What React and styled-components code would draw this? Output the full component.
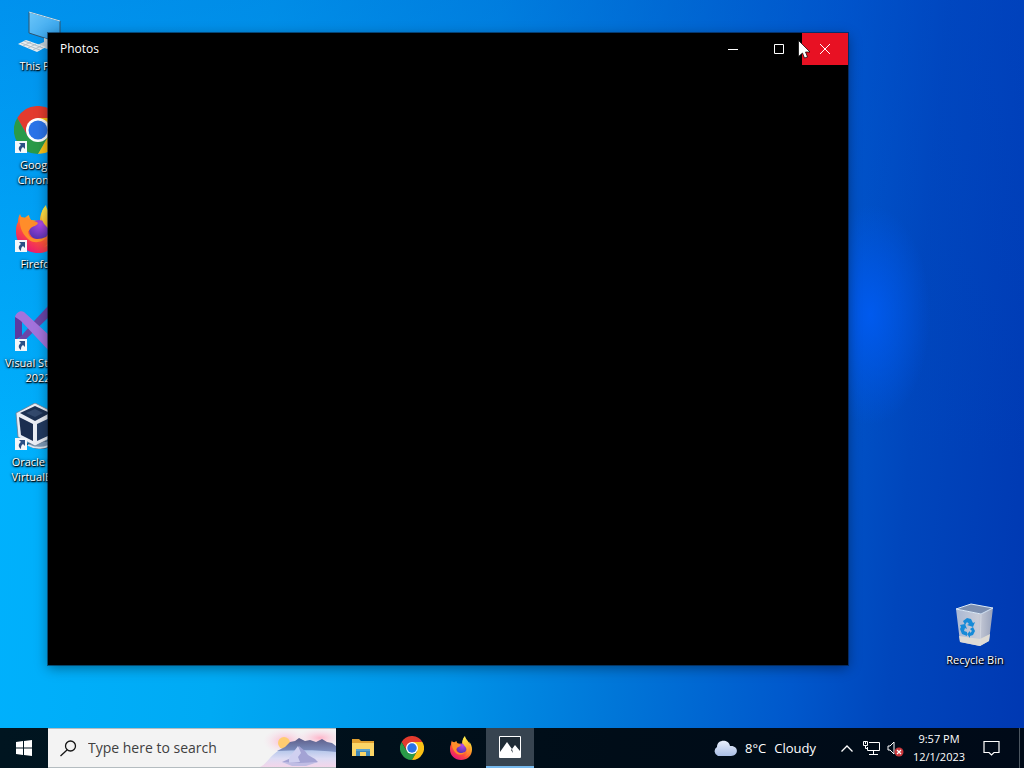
import React from "react";
import styled, { createGlobalStyle } from "styled-components";

const GlobalStyle = createGlobalStyle`
  * {
    box-sizing: border-box;
  }

  body {
    margin: 0;
    font-family: "Open Sans", "Noto Sans", sans-serif;
    overflow: hidden;
  }

  button, input {
    font: inherit;
    border: 0;
    padding: 0;
    margin: 0;
    background: none;
    color: inherit;
  }
`;

const Desktop = styled.div`
  display: flex;
  flex-direction: column;
  height: 100vh;
  background:
    radial-gradient(ellipse 60px 110px at 85% 41%, rgba(0, 92, 245, 0.85), rgba(0, 92, 245, 0) 100%),
    linear-gradient(180deg, rgba(0, 72, 200, 0.3) 0%, rgba(0, 72, 200, 0) 60%),
    linear-gradient(95deg, #00b2fe 0%, #00aaf4 25%, #0094e8 46%, #0076d8 62%, #0058cc 78%, #0046bc 87%, #0038b2 100%);
`;

const Workspace = styled.main`
  position: relative;
  flex: 1;
  display: flex;
  justify-content: space-between;
  padding-right: 11px;
`;

const IconColumn = styled.div`
  display: flex;
  flex-direction: column;
  justify-content: ${(props) => (props.$end ? "flex-end" : "flex-start")};
  padding-bottom: ${(props) => (props.$end ? "35px" : "0")};
  width: 76px;
`;

const Shortcut = styled.button`
  display: flex;
  flex-direction: column;
  align-items: center;
  gap: 3px;
  height: 99px;
  padding-top: 7px;
  color: #fff;
`;

const ShortcutPicture = styled.span`
  position: relative;
  width: 48px;
  height: 48px;

  svg {
    display: block;
  }
`;

const ArrowBadge = styled.span`
  position: absolute;
  left: 1px;
  bottom: 1px;
`;

const ShortcutLabel = styled.span`
  font-size: 11px;
  line-height: 15px;
  text-align: center;
  white-space: pre;
  text-shadow: 1px 1px 1px #000, 0 1px 2px #000, 0 0 3px rgba(0, 0, 0, 0.5);
`;

const Window = styled.section`
  position: absolute;
  top: 33px;
  right: 176px;
  bottom: 63px;
  left: 48px;
  background: #000;
  box-shadow: 0 0 0 1px rgba(10, 25, 50, 0.55), 0 3px 12px rgba(0, 0, 0, 0.4);
`;

const TitleBar = styled.header`
  display: flex;
  align-items: center;
  height: 32px;
  padding-left: 12px;
  color: #fff;
`;

const Title = styled.h1`
  flex: 1;
  margin: 0;
  font-size: 12px;
  font-weight: 400;
  line-height: 16px;
`;

const CaptionButton = styled.button`
  display: grid;
  place-items: center;
  width: 46px;
  height: 32px;
  background: ${(props) => (props.$danger ? "#e81123" : "transparent")};
`;

const Pointer = styled.svg`
  position: absolute;
  top: 7px;
  right: 38px;
`;

const Taskbar = styled.footer`
  display: flex;
  align-items: stretch;
  height: 40px;
  background: linear-gradient(90deg, #001520, #000d18 60%, #000a18);
  color: #fff;
`;

const TaskButton = styled.button`
  display: grid;
  place-items: center;
  width: 48px;
  background: ${(props) => (props.$active ? "#374450" : "transparent")};
  border-bottom: ${(props) => (props.$active ? "2px solid #76b9ed" : "0")};
`;

const SearchBox = styled.label`
  display: flex;
  align-items: center;
  width: 288px;
  padding-left: 12px;
  gap: 11px;
  background: #f3f3f3;
  border: solid #b4bcc0;
  border-width: 1px 0;
  color: #111;

  svg {
    flex: none;
  }
`;

const SearchInput = styled.input`
  flex: 1;
  min-width: 0;
  font-size: 14px;
  line-height: 20px;
  outline: none;

  &::placeholder {
    color: #404040;
    opacity: 1;
  }
`;

const Apps = styled.nav`
  display: flex;
  flex: 1;
  gap: 1px;
  padding-left: 3px;
`;

const Weather = styled.button`
  display: flex;
  align-items: center;
  gap: 8px;
  margin-right: 19px;
  font-size: 13px;
  line-height: 20px;
`;

const TrayButton = styled.button`
  display: grid;
  place-items: center;
  width: 24px;
`;

const Clock = styled.button`
  width: 64px;
  font-size: 11px;
  line-height: 18px;
  text-align: center;
`;

const Notifications = styled.button`
  display: grid;
  place-items: center;
  width: 40px;
`;

const ShowDesktop = styled.button`
  width: 5px;
  margin-left: 8px;
  border-left: 1px solid #4c5660;
`;

const ChromeIcon = ({ size }) => (
  <svg width={size} height={size} viewBox="0 0 48 48">
    <path fill="#e33b2e" d="M24 12h20.8A24 24 0 0 0 3.2 12l10.4 18L24 24z" />
    <path fill="#2a9a48" d="M13.6 30 3.2 12A24 24 0 0 0 24 48l10.4-18L24 24z" />
    <path fill="#fbc116" d="M34.4 30 24 48a24 24 0 0 0 20.8-36H24v12z" />
    <circle cx="24" cy="24" r="12" fill="#fff" />
    <circle cx="24" cy="24" r="9.5" fill="#2a73e8" />
  </svg>
);

const FirefoxIcon = ({ size }) => (
  <svg width={size} height={size} viewBox="0 0 48 48">
    <defs>
      <linearGradient id="foxBody" x1="0.8" y1="0.1" x2="0.25" y2="0.95">
        <stop offset="0" stopColor="#fff14a" />
        <stop offset="0.35" stopColor="#ffa528" />
        <stop offset="0.65" stopColor="#ff5338" />
        <stop offset="1" stopColor="#e81576" />
      </linearGradient>
      <linearGradient id="foxFlame" x1="0.4" y1="0" x2="0.6" y2="1">
        <stop offset="0" stopColor="#fff04d" />
        <stop offset="0.5" stopColor="#ffb52e" />
        <stop offset="1" stopColor="#ff6a36" />
      </linearGradient>
      <radialGradient id="foxGlobe" cx="0.6" cy="0.2" r="0.9">
        <stop offset="0" stopColor="#b049e8" />
        <stop offset="1" stopColor="#4b2fa8" />
      </radialGradient>
    </defs>
    <path
      fill="url(#foxBody)"
      d="M4 17C4 13 5 11 6 9c1 3 2 4 4 5 1-2 3-3 5-4 0 2 1 3 2 5l9 1c0-6 2-12 6-15 0 5 3 7 6 10 1 1 2 3 3 5 0-2 0-3-1-5 4 4 6 10 6 16 0 13-10 21-22 21S2 39 2 27c0-4 0-7 2-10z"
    />
    <circle cx="25" cy="25" r="10" fill="url(#foxGlobe)" />
    <path
      fill="url(#foxFlame)"
      d="M32 0c0 6 8 9 8 19 1-1 1-3 1-4 5 12 0 24-11 27 6-4 8-9 6-15-1-4-5-6-7-10-3-6-1-13 3-17z"
    />
    <path fill="#ff8d2a" d="M6 12c3 0 8 1 11 3 2 1 5 1 7 3-1 3-5 3-7 5-2 1-1 3-3 3 0 5 4 8 9 8 4 0 6-1 9-2-3 6-13 7-18 2-7-6-9-15-8-22z" />
  </svg>
);

const ComputerIcon = () => (
  <svg width="48" height="48" viewBox="0 0 48 48">
    <defs>
      <linearGradient id="screen" x1="0" y1="0" x2="1" y2="1">
        <stop offset="0" stopColor="#6cc6fa" />
        <stop offset="1" stopColor="#289be8" />
      </linearGradient>
    </defs>
    <path d="M15 5 46 14v22L15 26z" fill="url(#screen)" stroke="#31546f" strokeWidth="1" />
    <path d="M15 5 46 14" stroke="#c9e7f7" strokeWidth="1" />
    <path d="m30 31 6 2v4l5 2-8 3-10-4 7-3z" fill="#c5d2da" />
    <path d="m4 37 8-4 20 7-9 5z" fill="#e8edf0" />
    <path d="m7 36 19 7M10 34l19 7M9 39l8-4M14 41l8-4M19 43l8-4" stroke="#b4c0c8" strokeWidth="1" />
  </svg>
);

const VisualStudioIcon = () => (
  <svg width="48" height="48" viewBox="0 0 48 48">
    <path d="m1 12 7 5v15l-7 4z" fill="#5c3aa0" />
    <path d="m3 37 18-21L34 2l3-1 10 5v8L36 12 9 38c-2 1-4 0-6-1z" fill="#6a46a8" />
    <path d="M1 13c1-4 5-7 9-5l26 24 11 6v5l-11 5L8 18c-2-2-5-4-7-5z" fill="#a373dc" />
    <path d="m36 1 11 5v37l-11 5z" fill="#b985ec" />
  </svg>
);

const VirtualBoxIcon = () => (
  <svg width="48" height="48" viewBox="0 0 48 48">
    <path d="M13 41c6 6 20 6 28 0l2-5-22 4z" fill="#7d9ab8" stroke="#24415f" />
    <path d="M14 42c7 4 17 4 26-2" fill="none" stroke="#dbe6f0" strokeWidth="2" />
    <path d="M21 0 41 10 39 34 21 43 4 34 2 10z" fill="#e9edf5" stroke="#6a7c94" strokeWidth="0.8" />
    <path d="M21 3 36 10 21 18 6 10z" fill="#1d3152" />
    <path d="m5 14 14 7v17L7 32z" fill="#1b2e50" />
    <path d="m23 21 15-7-2 18-13 6z" fill="#223a60" />
    <path d="m12 10 9-4 8 4-8 4z" fill="#33496c" />
  </svg>
);

const RecycleIcon = () => (
  <svg width="48" height="48" viewBox="0 0 48 48">
    <defs>
      <linearGradient id="bin" x1="0" y1="0" x2="1" y2="0">
        <stop offset="0" stopColor="#a9b8d4" />
        <stop offset="0.6" stopColor="#c8ccd8" />
        <stop offset="1" stopColor="#98a2ba" />
      </linearGradient>
    </defs>
    <path d="m5 8 25 5 12-6-4 33-9 5-20-4z" fill="url(#bin)" />
    <path d="m8 35 21 3 10-5-1 7-9 5-20-4z" fill="#dedbd5" />
    <path d="m5 8 15-5 22 4-12 6z" fill="#7d8faf" stroke="#dce9f5" strokeWidth="1" />
    <path d="m30 14-1 30" stroke="#dcdfe8" strokeWidth="0.6" />
    <g fill="#168bd8">
      <path d="m12 20 4-3 4 1 2 4 2-1-2 5-6-2 2-1-2-2-2 3z" />
      <path d="m9 24 5-1 2 5-2-1-1 3 3 1v4l-5-2-2-5 1-2z" />
      <path d="m19 28 3-2 2 4-2 4-3 1v2l-3-4 3-3v2l2-2z" />
    </g>
  </svg>
);

const ShortcutArrow = () => (
  <svg width="12" height="12" viewBox="0 0 12 12">
    <path fill="#f4f7fa" d="M0 0h12v12H0z" />
    <path fill="#2b4f85" d="M4 2h6v6L8 6c-2 1-2 3-2 5-3-2-3-5 0-7z" />
  </svg>
);

const WindowsLogo = () => (
  <svg width="16" height="16" viewBox="0 0 16 16" fill="#fff">
    <path d="m0 2 7-1v6.500H0zM8 1l8-1v7.500H8zM0 8.500h7V15l-7-1zM8 8.500h8V16l-8-1z" />
  </svg>
);

const SearchIcon = () => (
  <svg width="17" height="17" viewBox="0 0 17 17" fill="none" stroke="#151515" strokeWidth="1.3">
    <circle cx="10.500" cy="6" r="5" />
    <path d="m7 10-6.500 6" />
  </svg>
);

const SearchArt = () => (
  <svg width="78" height="38" viewBox="0 0 78 38">
    <defs>
      <radialGradient id="glow">
        <stop offset="0" stopColor="#ffb4c8" />
        <stop offset="1" stopColor="#f7dfef" stopOpacity="0" />
      </radialGradient>
      <linearGradient id="sea" x1="0" y1="0" x2="0" y2="1">
        <stop offset="0" stopColor="#b4c6ea" />
        <stop offset="0.5" stopColor="#dcdcf4" />
        <stop offset="1" stopColor="#f4d6ea" />
      </linearGradient>
      <linearGradient id="hills" x1="0" y1="0" x2="0" y2="1">
        <stop offset="0" stopColor="#5d5d88" />
        <stop offset="1" stopColor="#7f93c4" />
      </linearGradient>
    </defs>
    <ellipse cx="27" cy="12" rx="22" ry="13" fill="url(#glow)" />
    <ellipse cx="62" cy="9" rx="24" ry="10" fill="url(#glow)" />
    <circle cx="26" cy="14" r="6" fill="#ffcc70" />
    <path d="M2 38c7-3 11-13 20-17h56v17z" fill="url(#sea)" />
    <path d="m19 22 8-4 5-5 5-1 4-3 6 3 5-1 6 2 6-3 5 3 5 1 4 3v6c-16-2-38-2-59-1z" fill="url(#hills)" />
    <path d="m24 33 9-4 6-8 2-4 6 5 3 4 7 4 3 3-16 3z" fill="#a3a3d4" />
    <path d="m31 29 9-12 3 7-3 4 2 5-11 1z" fill="#d0d0f0" />
    <path d="m24 33 18 1 18-1-12 4H34z" fill="#c0bde4" />
  </svg>
);

const ExplorerIcon = () => (
  <svg width="22" height="20" viewBox="0 0 22 20">
    <path d="M0 1h7l2 2h13v15H0z" fill="#e0a030" />
    <path d="M0 5h22v13H0z" fill="#fbd566" />
    <path d="M4 11h14v7h-4v-4H8v4H4z" fill="#3f88b8" />
    <path d="M4 11h14v2H4z" fill="#5ba3cc" />
  </svg>
);

const PhotosIcon = () => (
  <svg width="22" height="22" viewBox="0 0 22 22">
    <path d="M.5.500h21v21H.500z" fill="#202c36" stroke="#fff" />
    <path d="M1 16 8 6l5 7 3-4 5 6v6H1z" fill="#fff" />
    <path d="m12 14 2 3-1-4z" fill="#202c36" />
  </svg>
);

const CloudIcon = () => (
  <svg width="24" height="17" viewBox="0 0 24 17">
    <defs>
      <linearGradient id="cloud" x1="0" y1="0" x2="0" y2="1">
        <stop offset="0" stopColor="#e8effc" />
        <stop offset="1" stopColor="#a9bee5" />
      </linearGradient>
    </defs>
    <path d="M5 16a5 5 0 0 1-1-9C4-1 16-1 17 6c9-1 9 10 1 10z" fill="url(#cloud)" />
  </svg>
);

const NetworkIcon = () => (
  <svg width="17" height="16" viewBox="0 0 17 16" fill="none" stroke="#fff">
    <path d="M6 2.500h10.500v8H4.500V7M10.500 10.500v4M6 14.500h9M.500 1.500h4v4h-4zM2.500 5.500v3h2M2.500 2v2" />
  </svg>
);

const VolumeIcon = () => (
  <svg width="17" height="17" viewBox="0 0 17 17">
    <path d="M1 6h2l4-4v12l-4-4H1z" fill="none" stroke="#fff" strokeLinejoin="round" />
    <circle cx="12" cy="12" r="4.500" fill="#c8363b" />
    <path d="m10 10 4 4m0-4-4 4" stroke="#fff" strokeWidth="1.2" />
  </svg>
);

const shortcuts = [
  { label: "This PC", icon: <ComputerIcon /> },
  { label: "Google\nChrome", icon: <ChromeIcon size={48} />, linked: true },
  { label: "Firefox", icon: <FirefoxIcon size={48} />, linked: true },
  { label: "Visual Studio\n2022", icon: <VisualStudioIcon />, linked: true },
  { label: "Oracle VM\nVirtualBox", icon: <VirtualBoxIcon />, linked: true },
];

const apps = [
  { name: "File Explorer", icon: <ExplorerIcon /> },
  { name: "Google Chrome", icon: <ChromeIcon size={24} /> },
  { name: "Firefox", icon: <FirefoxIcon size={24} /> },
  { name: "Photos", icon: <PhotosIcon />, active: true },
];

const DesktopShortcut = ({ label, icon, linked }) => (
  <Shortcut>
    <ShortcutPicture>
      {icon}
      {linked && <ArrowBadge><ShortcutArrow /></ArrowBadge>}
    </ShortcutPicture>
    <ShortcutLabel>{label}</ShortcutLabel>
  </Shortcut>
);

const PhotosWindow = () => (
  <Window>
    <TitleBar>
      <Title>Photos</Title>
      <CaptionButton aria-label="Minimize">
        <svg width="10" height="10" stroke="#fff"><path d="M0 5.500h10" /></svg>
      </CaptionButton>
      <CaptionButton aria-label="Maximize">
        <svg width="10" height="10" stroke="#fff" fill="none"><path d="M.500.500h9v9h-9z" /></svg>
      </CaptionButton>
      <CaptionButton aria-label="Close" $danger>
        <svg width="10" height="10" stroke="#fff"><path d="m0 0 10 10M10 0 0 10" /></svg>
      </CaptionButton>
    </TitleBar>
    <Pointer width="12" height="19" viewBox="0 0 12 19">
      <path d="M.500.500v16l4-3.500 2 5 3-1-2-5h4.500z" fill="#fff" stroke="#000" strokeWidth="0.7" />
    </Pointer>
  </Window>
);

export default function App() {
  return (
    <>
      <GlobalStyle />
      <Desktop>
        <Workspace>
          <IconColumn>
            {shortcuts.map((item) => <DesktopShortcut key={item.label} {...item} />)}
          </IconColumn>
          <IconColumn $end>
            <DesktopShortcut label="Recycle Bin" icon={<RecycleIcon />} />
          </IconColumn>
          <PhotosWindow />
        </Workspace>
        <Taskbar>
          <TaskButton aria-label="Start"><WindowsLogo /></TaskButton>
          <SearchBox>
            <SearchIcon />
            <SearchInput type="text" aria-label="Search" placeholder="Type here to search" />
            <SearchArt />
          </SearchBox>
          <Apps>
            {apps.map((app) => (
              <TaskButton key={app.name} aria-label={app.name} $active={app.active}>{app.icon}</TaskButton>
            ))}
          </Apps>
          <Weather>
            <CloudIcon />
            <span>8°C</span>
            <span>Cloudy</span>
          </Weather>
          <TrayButton aria-label="Show hidden icons">
            <svg width="12" height="7" fill="none" stroke="#fff" strokeWidth="1.3"><path d="m.500 6.500 5.500-5.500 5.500 5.500" /></svg>
          </TrayButton>
          <TrayButton aria-label="Network"><NetworkIcon /></TrayButton>
          <TrayButton aria-label="Volume"><VolumeIcon /></TrayButton>
          <Clock>9:57 PM<br />12/1/2023</Clock>
          <Notifications aria-label="Notifications">
            <svg width="17" height="17" fill="none" stroke="#fff" strokeWidth="1.2">
              <path d="M1 1.500h15v11h-5L8.500 15 6 12.500H1z" />
            </svg>
          </Notifications>
          <ShowDesktop aria-label="Show desktop" />
        </Taskbar>
      </Desktop>
    </>
  );
}
